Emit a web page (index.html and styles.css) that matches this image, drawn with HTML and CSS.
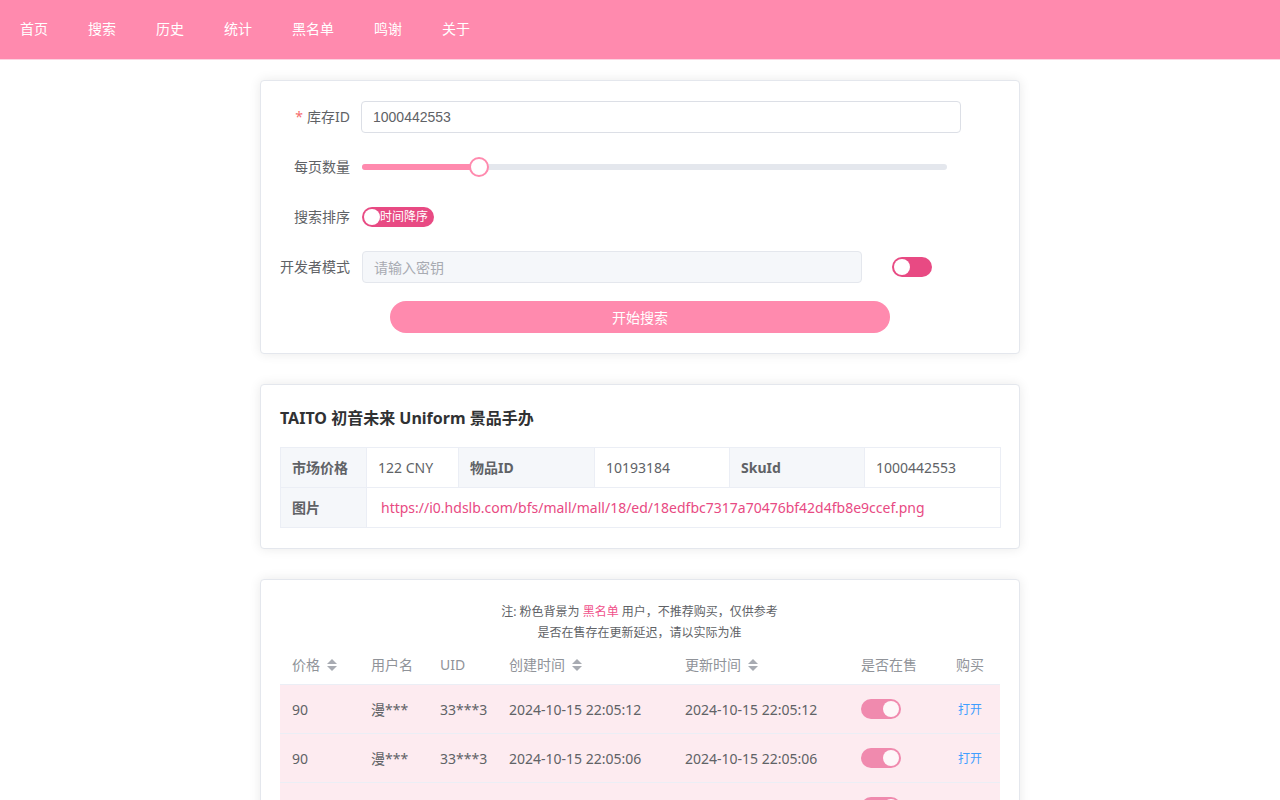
FILE: index.html
```html
<!DOCTYPE html>
<html lang="zh-CN">
<head>
<meta charset="utf-8">
<title>库存查询</title>
<link rel="stylesheet" href="styles.css">
</head>
<body>
<header class="nav">
  <ul class="menu">
    <li>首页</li>
    <li>搜索</li>
    <li>历史</li>
    <li>统计</li>
    <li>黑名单</li>
    <li>鸣谢</li>
    <li>关于</li>
  </ul>
</header>
<main class="page">
  <section class="card">
    <div class="form">
      <div class="form-item">
        <div class="label"><span class="req">*</span>库存ID</div>
        <div class="content"><div class="input"><span>1000442553</span></div></div>
      </div>
      <div class="form-item">
        <div class="label">每页数量</div>
        <div class="content">
          <div class="slider">
            <div class="runway"><div class="bar" style="width:20%"></div><div class="thumb" style="left:20%"></div></div>
          </div>
        </div>
      </div>
      <div class="form-item">
        <div class="label">搜索排序</div>
        <div class="content">
          <div class="switch-prompt"><span class="knob"></span><span class="prompt">时间降序</span></div>
        </div>
      </div>
      <div class="form-item">
        <div class="label">开发者模式</div>
        <div class="content">
          <div class="input input-disabled"><span class="ph">请输入密钥</span></div>
          <div class="switch switch-off"><span class="knob"></span></div>
        </div>
      </div>
      <div class="form-actions">
        <div class="btn">开始搜索</div>
      </div>
    </div>
  </section>

  <section class="card">
    <h2 class="title">TAITO 初音未来 Uniform 景品手办</h2>
    <table class="desc">
      <colgroup><col class="c1"><col class="c2"><col class="c3"><col class="c4"><col class="c5"><col class="c6"></colgroup>
      <tr>
        <th>市场价格</th><td>122 CNY</td>
        <th>物品ID</th><td>10193184</td>
        <th>SkuId</th><td>1000442553</td>
      </tr>
      <tr>
        <th>图片</th>
        <td colspan="5"><span class="link">https://i0.hdslb.com/bfs/mall/mall/18/ed/18edfbc7317a70476bf42d4fb8e9ccef.png</span></td>
      </tr>
    </table>
  </section>

  <section class="card">
    <div class="note">
      <p>注: 粉色背景为 <span class="pink">黑名单</span> 用户，不推荐购买，仅供参考</p>
      <p>是否在售存在更新延迟，请以实际为准</p>
    </div>
    <table class="grid">
      <colgroup><col class="g1"><col class="g2"><col class="g3"><col class="g4"><col class="g5"><col class="g6"><col class="g7"></colgroup>
      <thead>
        <tr>
          <th><div class="cell">价格<span class="caret"><svg width="10" height="12" viewBox="0 0 10 12"><path d="M0 5 L5 0 L10 5 Z" fill="#a8abb2"/><path d="M0 7 L10 7 L5 12 Z" fill="#a8abb2"/></svg></span></div></th>
          <th><div class="cell">用户名</div></th>
          <th><div class="cell">UID</div></th>
          <th><div class="cell">创建时间<span class="caret"><svg width="10" height="12" viewBox="0 0 10 12"><path d="M0 5 L5 0 L10 5 Z" fill="#a8abb2"/><path d="M0 7 L10 7 L5 12 Z" fill="#a8abb2"/></svg></span></div></th>
          <th><div class="cell">更新时间<span class="caret"><svg width="10" height="12" viewBox="0 0 10 12"><path d="M0 5 L5 0 L10 5 Z" fill="#a8abb2"/><path d="M0 7 L10 7 L5 12 Z" fill="#a8abb2"/></svg></span></div></th>
          <th><div class="cell">是否在售</div></th>
          <th class="center"><div class="cell">购买</div></th>
        </tr>
      </thead>
      <tbody>
        <tr class="black">
          <td><div class="cell">90</div></td>
          <td><div class="cell">漫***</div></td>
          <td><div class="cell">33***3</div></td>
          <td><div class="cell">2024-10-15 22:05:12</div></td>
          <td><div class="cell">2024-10-15 22:05:12</div></td>
          <td><div class="cell"><div class="switch switch-on"><span class="knob"></span></div></div></td>
          <td class="center"><div class="cell"><span class="open">打开</span></div></td>
        </tr>
        <tr class="black">
          <td><div class="cell">90</div></td>
          <td><div class="cell">漫***</div></td>
          <td><div class="cell">33***3</div></td>
          <td><div class="cell">2024-10-15 22:05:06</div></td>
          <td><div class="cell">2024-10-15 22:05:06</div></td>
          <td><div class="cell"><div class="switch switch-on"><span class="knob"></span></div></div></td>
          <td class="center"><div class="cell"><span class="open">打开</span></div></td>
        </tr>
        <tr class="black">
          <td><div class="cell">90</div></td>
          <td><div class="cell">漫***</div></td>
          <td><div class="cell">33***3</div></td>
          <td><div class="cell">2024-10-15 22:04:58</div></td>
          <td><div class="cell">2024-10-15 22:04:58</div></td>
          <td><div class="cell"><div class="switch switch-on"><span class="knob"></span></div></div></td>
          <td class="center"><div class="cell"><span class="open">打开</span></div></td>
        </tr>
      </tbody>
    </table>
  </section>
</main>
</body>
</html>
```

FILE: styles.css
```css
* { box-sizing: border-box; }
html, body { margin: 0; padding: 0; }
body {
  font-family: "Noto Sans", "Noto Sans CJK SC", sans-serif;
  font-size: 14px;
  color: #606266;
  background: #fff;
}

.nav {
  height: 60px;
  background: #ff8aae;
  border-bottom: 1px solid #fdd3e1;
}
.menu {
  list-style: none;
  margin: 0;
  padding: 0;
  display: flex;
  height: 59px;
}
.menu li {
  padding: 0 20px;
  line-height: 58px;
  color: #fff;
  font-size: 14px;
}

.page {
  padding: 20px 0 0;
  display: flex;
  flex-direction: column;
  align-items: center;
  gap: 30px;
}
.card {
  width: 760px;
  border: 1px solid #e4e7ed;
  border-radius: 4px;
  box-shadow: 0 0 12px rgba(0, 0, 0, 0.09);
  background: #fff;
  padding: 20px 20px 20px 19px;
}

/* form */
.form { display: flex; flex-direction: column; gap: 18px; }
.form-item { display: flex; align-items: center; height: 32px; }
.label {
  width: 82px;
  padding-right: 12px;
  text-align: right;
  color: #606266;
  font-size: 14px;
  line-height: 30px;
  white-space: nowrap;
}
.req { color: #f56c6c; margin-right: 4px; }
.content { flex: 1; display: flex; align-items: center; height: 32px; }
.input {
  width: 600px;
  height: 32px;
  border: 1px solid #dcdfe6;
  border-radius: 4px;
  padding: 0 11px;
  display: flex;
  align-items: center;
  color: #606266;
  font-family: "Liberation Sans", "Noto Sans CJK SC", sans-serif;
  font-size: 14px;
  margin-left: -1px;
}
.input-disabled {
  width: 500px;
  margin-left: 0;
  background: #f5f7fa;
  border-color: #e4e7ed;
}
.ph { color: #a8abb2; }

.slider { width: 585px; height: 32px; display: flex; align-items: center; }
.runway {
  position: relative;
  width: 100%;
  height: 6px;
  border-radius: 3px;
  background: #e4e7ed;
}
.bar {
  height: 6px;
  border-radius: 3px 0 0 3px;
  background: #ff8aae;
}
.thumb {
  position: absolute;
  top: 50%;
  width: 20px;
  height: 20px;
  margin: -10px 0 0 -10px;
  border: 2px solid #ff8aae;
  border-radius: 50%;
  background: #fff;
}

.switch-prompt {
  display: inline-flex;
  align-items: center;
  height: 20px;
  width: 72px;
  border-radius: 10px;
  background: #e84a83;
  padding-left: 2px;
}
.switch-prompt .knob {
  width: 16px;
  height: 16px;
  border-radius: 50%;
  background: #fff;
}
.prompt {
  color: #fff;
  font-size: 12px;
  line-height: 20px;
}

.switch {
  width: 40px;
  height: 20px;
  border-radius: 10px;
  background: #e84a83;
  display: flex;
  align-items: center;
  padding: 0 2px;
}
.switch .knob {
  width: 16px;
  height: 16px;
  border-radius: 50%;
  background: #fff;
}
.switch-off { margin-left: 30px; }
.switch-on { justify-content: flex-end; opacity: 0.6; }

.form-actions { display: flex; justify-content: center; padding-left: 1px; }
.btn {
  width: 500px;
  height: 32px;
  border-radius: 16px;
  background: #ff8aae;
  color: #fff;
  font-size: 14px;
  display: flex;
  align-items: center;
  justify-content: center;
}

/* descriptions */
.title {
  margin: 0 0 16px;
  font-size: 16px;
  line-height: 26px;
  font-weight: bold;
  color: #303133;
}
.desc {
  width: 720px;
  border-collapse: collapse;
  table-layout: fixed;
}
.desc .c1 { width: 86px; }
.desc .c2 { width: 92px; }
.desc .c3 { width: 136px; }
.desc .c4 { width: 135px; }
.desc .c5 { width: 135px; }
.desc .c6 { width: 136px; }
.desc th, .desc td {
  border: 1px solid #ebeef5;
  padding: 8px 11px;
  line-height: 23px;
  font-size: 14px;
  text-align: left;
  white-space: nowrap;
}
.desc th { background: #f5f7fa; font-weight: bold; color: #606266; }
.desc td { color: #606266; }
.link { color: #e84a83; padding-left: 3px; }

/* note */
.note {
  text-align: center;
  font-size: 12px;
  color: #606266;
  padding-top: 1px;
  margin-bottom: 2px;
}
.note p { margin: 0; line-height: 21px; }
.pink { color: #f0508a; }

/* table */
.grid {
  width: 720px;
  border-collapse: collapse;
  table-layout: fixed;
}
.grid .g1 { width: 79px; }
.grid .g2 { width: 69px; }
.grid .g3 { width: 69px; }
.grid .g4 { width: 176px; }
.grid .g5 { width: 176px; }
.grid .g6 { width: 91px; }
.grid .g7 { width: 60px; }
.grid th, .grid td {
  padding: 8px 0;
  border-bottom: 1px solid #ebeef5;
  text-align: left;
  font-weight: normal;
}
.grid th { color: #909399; }
.grid td { color: #606266; }
.grid .cell {
  padding: 0 12px;
  line-height: 23px;
  display: flex;
  align-items: center;
  white-space: nowrap;
}
.grid td .cell { min-height: 32px; }
.grid .center .cell { justify-content: center; }
.caret { display: inline-flex; margin-left: 7px; }
.black td { background: #fdebf0; }
.open { color: #409eff; font-size: 12px; }
```
